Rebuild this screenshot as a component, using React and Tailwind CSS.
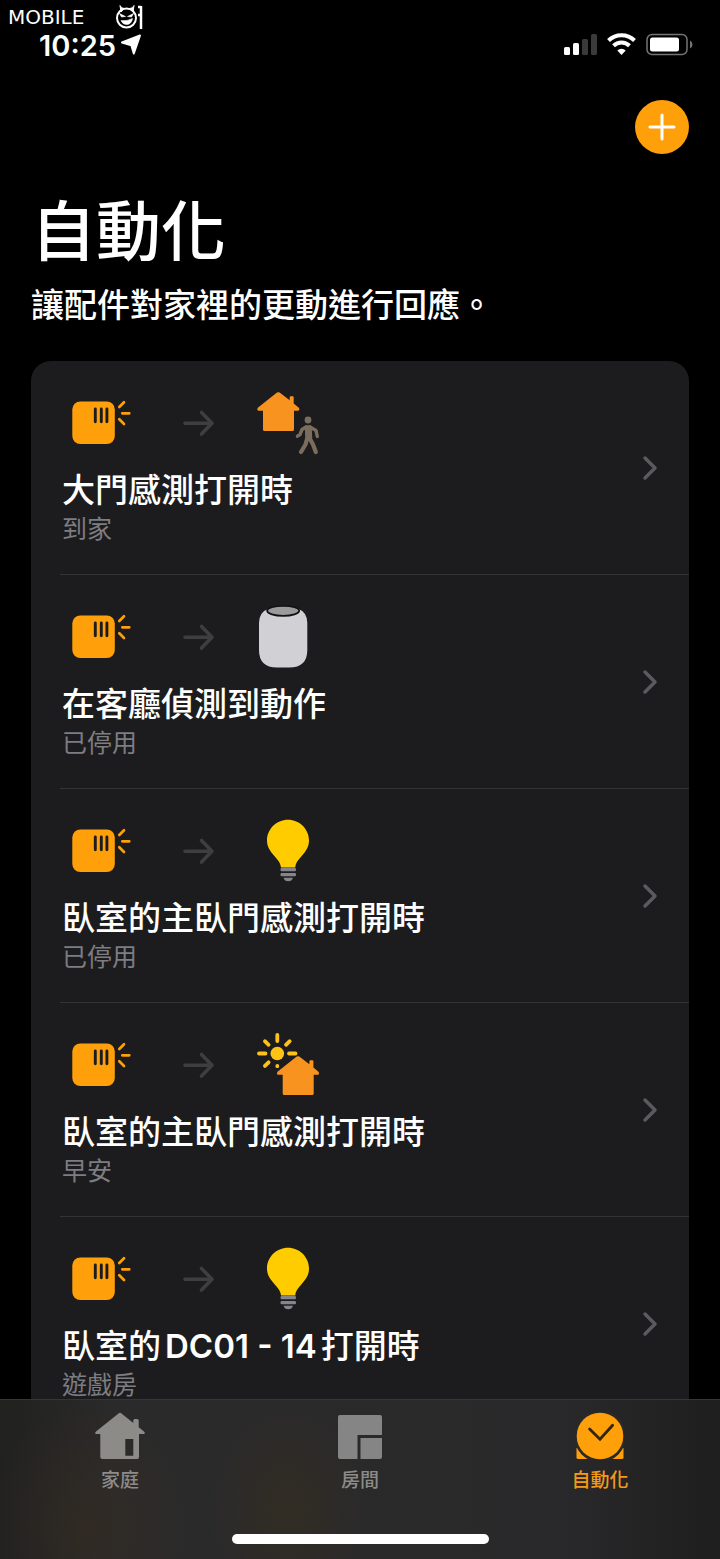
import React from "react";

function BrandMark() {
  return (
    <div className="absolute top-1 left-2 flex h-[26px] items-center gap-[6px] text-white">
      <span className="w-[102px] font-['DejaVu_Sans',sans-serif] text-xl leading-none">MOBILE</span>
      <svg width="28" height="26" viewBox="0 0 28 26" fill="none" stroke="#fff" aria-hidden="true">
        <circle cx="10.500" cy="14" r="9.500" strokeWidth="2" />
        <path d="M4 1.500 Q5 4.500 8.500 4.500 L5 8 Z M18 1.500 Q17 4.500 13.500 4.500 L17 8 Z" fill="#fff" strokeWidth="1" />
        <path d="M3.500 9.500 L9.500 12.500 L5.500 13 Z M17.500 9.500 L11.500 12.500 L15.500 13 Z" fill="#fff" strokeWidth="0.600" />
        <path d="M5 16.500 Q11 17.500 16.500 14.500 Q15.500 20.500 10.500 20.500 Q6.500 20.500 5 16.500 Z" fill="#fff" strokeWidth="0.600" />
        <path d="M25 2 V25 M22 3 H25 M22 11 H25" strokeWidth="2.500" />
      </svg>
    </div>
  );
}

function StatusBar() {
  return (
    <header className="flex h-[90px] shrink-0 items-center justify-between pr-[27px] pl-[39px]">
      <div className="flex items-center gap-[5px]">
        <time className="text-[29px] leading-none font-semibold">10:25</time>
        <svg width="22" height="22" viewBox="0 0 22 22" fill="#fff" stroke="#fff" strokeWidth="2" strokeLinejoin="round" aria-hidden="true">
          <path d="M19 1.500 L12.800 19.500 L10.300 11.200 L1 8.500 Z" />
        </svg>
      </div>
      <svg width="129" height="24" viewBox="0 0 129 24" fill="#fff" role="img" aria-label="訊號、Wi-Fi 與電池">
        <rect x="0" y="14" width="6" height="8" rx="1.500" />
        <rect x="9" y="10" width="6" height="12" rx="1.500" />
        <rect x="18" y="6" width="6" height="16" rx="1.500" fill="#3a3a3c" />
        <rect x="27" y="1" width="6" height="21" rx="1.500" fill="#3a3a3c" />
        <g fill="none" stroke="#fff" strokeWidth="4">
          <path d="M44.500 7.500 A18.500 18.500 0 0 1 70.500 7.500" />
          <path d="M49.500 12.800 A11.500 11.500 0 0 1 65.500 12.800" />
        </g>
        <path d="M57.500 22 L53.300 17.500 A6 6 0 0 1 61.700 17.500 Z" />
        <rect x="83" y="1.500" width="40" height="20" rx="5" fill="none" stroke="#747476" strokeWidth="1.500" />
        <rect x="86" y="4.500" width="29" height="14" rx="2.500" />
        <path d="M126 7.500 Q128.500 9 128.500 11.500 Q128.500 14 126 15.500 Z" fill="#747476" />
      </svg>
    </header>
  );
}

function SensorIcon() {
  return (
    <svg width="60" height="66" viewBox="0 0 60 66" aria-hidden="true">
      <rect x="1.300" y="12.500" width="42.500" height="42.500" rx="8" fill="#ff9f0a" />
      <path d="M24.300 20 V32.800 M30.300 20 V32.800 M35.900 20 V32.800" stroke="#1c1c1e" strokeWidth="2.900" strokeLinecap="round" />
      <path d="M48.300 18 L53 13.300 M51.300 24.300 H58.300 M48.300 30.300 L53 35" stroke="#ff9f0a" strokeWidth="2.700" strokeLinecap="round" />
    </svg>
  );
}

function ArrowIcon() {
  return (
    <svg width="32" height="66" viewBox="0 0 32 66" fill="none" stroke="#3e3e40" strokeWidth="3.600" strokeLinecap="round" strokeLinejoin="round" aria-hidden="true">
      <path d="M2 34.300 H29 M18.500 23.500 L29 34.300 L18.500 45.100" />
    </svg>
  );
}

const HOUSE =
  "M20 3.600 Q21.300 2.700 22.600 3.600 L32.700 11.300 V8.200 Q32.700 7.200 33.700 7.200 H35.700 Q36.700 7.200 36.700 8.200 V14.500 L41.800 18.700 Q43.200 21.700 41 21.700 H37 V40.500 Q37 42 35.500 42 H7.500 Q6 42 6 40.500 V21.700 H1.600 Q-0.600 21.700 0.800 18.700 Z";

function SceneIcon({ kind }) {
  return (
    <svg width="64" height="66" viewBox="0 0 64 66" aria-hidden="true">
      {kind === "arrive" && (
        <>
          <path d={HOUSE} fill="#f7931e" />
          <g fill="none" stroke="#7b6d5d" strokeLinecap="round" strokeLinejoin="round">
            <circle cx="51" cy="31" r="3.400" fill="#7b6d5d" stroke="none" />
            <path d="M49.500 38 H53 L53.500 49 H50 Z" fill="#7b6d5d" strokeWidth="3.500" />
            <path d="M49 38 L45 40.500 L43 45.500 L40.500 47.200 M53 38 L59 41.500 L60.300 47.500" strokeWidth="3.400" />
            <path d="M50 50 L48.500 55.500 L44 63 M52.500 49 L56 55.500 L58.800 63" strokeWidth="4.200" />
          </g>
        </>
      )}
      {kind === "speaker" && (
        <>
          <path d="M12 5.500 Q2 9 2 20 V47 Q2 64.500 20 64.500 H32.300 Q50.300 64.500 50.300 47 V20 Q50.300 9 40.500 5.500 Z" fill="#d1d0d5" />
          <ellipse cx="26.200" cy="7.800" rx="16" ry="5" fill="#9b9b9b" stroke="#111113" strokeWidth="1.800" />
        </>
      )}
      {kind === "bulb" && (
        <>
          <path d="M31 2.700 C42.600 2.700 52 12 52 23.500 C52 36.500 38.800 41 38.300 50.500 H24 C23.500 41 10 36.500 10 23.500 C10 12 19.400 2.700 31 2.700 Z" fill="#ffcc00" />
          <rect x="23.500" y="51" width="15.500" height="3.300" rx="1.200" fill="#84868b" />
          <rect x="23.500" y="56" width="15.500" height="3.300" rx="1.200" fill="#84868b" />
          <path d="M26.500 60.800 H36 Q35 64.300 31.200 64.300 Q27.500 64.300 26.500 60.800 Z" fill="#84868b" />
        </>
      )}
      {kind === "morning" && (
        <>
          <circle cx="20.300" cy="22.500" r="6.800" fill="#fdc213" />
          <path
            d="M20.300 4 V10 M32.700 10.200 L29 13.800 M38.500 22.500 H32 M20.300 35 V35.200 M7.900 34.900 L11.600 31.300 M2 22.500 H8.500 M7.900 10.200 L11.600 13.800"
            stroke="#fcc21b"
            strokeWidth="3.800"
            strokeLinecap="round"
          />
          <path transform="translate(19.700 22)" d={HOUSE} fill="#f7931e" />
        </>
      )}
    </svg>
  );
}

function Chevron() {
  return (
    <svg className="shrink-0" width="16" height="26" viewBox="0 0 16 26" fill="none" stroke="#5b5b5f" strokeWidth="3.500" strokeLinecap="round" strokeLinejoin="round" aria-hidden="true">
      <path d="M3 3 L13 13 L3 23" />
    </svg>
  );
}

const AUTOMATIONS = [
  { title: "大門感測打開時", detail: "到家", kind: "arrive" },
  { title: "在客廳偵測到動作", detail: "已停用", kind: "speaker" },
  { title: "臥室的主臥門感測打開時", detail: "已停用", kind: "bulb" },
  { title: "臥室的主臥門感測打開時", detail: "早安", kind: "morning" },
  {
    title: (
      <>
        臥室的<span className="mx-1 font-semibold">DC01 - 14</span>打開時
      </>
    ),
    detail: "遊戲房",
    kind: "bulb",
  },
];

function AutomationRow({ title, detail, kind }) {
  return (
    <li className="ml-[29px] border-b border-[#333335]">
      <button type="button" className="flex w-full items-center justify-between pr-[31px] pl-[2px] text-left">
        <span className="block pt-7 pb-[31px]">
          <span className="flex items-center pl-[9px]">
            <SensorIcon />
            <span className="ml-[52px]">
              <ArrowIcon />
            </span>
            <span className="ml-[42px]">
              <SceneIcon kind={kind} />
            </span>
          </span>
          <span className="mt-[13px] block text-[33px] leading-[44px] font-medium">{title}</span>
          <span className="mt-[3px] block text-[25px] leading-7 text-[#7d7d82]">{detail}</span>
        </span>
        <Chevron />
      </button>
    </li>
  );
}

function HomeTabIcon() {
  return (
    <svg width="50" height="48" viewBox="0 0 50 48" fill="#8d8b88" aria-hidden="true">
      <path
        fillRule="evenodd"
        d="M23.500 1.400 Q25 0.300 26.500 1.400 L38.300 11 V8.500 Q38.300 7 39.800 7 H42.200 Q43.700 7 43.700 8.500 V15.300 L49 19.500 Q51 22 48.500 22 H44 V45 Q44 47 42 47 H7.300 Q5.300 47 5.300 45 V22 H1.500 Q-1 22 1 19.500 Z M30.300 27 V43.700 H38.300 V27 Z"
      />
    </svg>
  );
}

function RoomsTabIcon() {
  return (
    <svg width="46" height="48" viewBox="0 0 46 48" fill="#868586" aria-hidden="true">
      <path d="M3 3 H43 Q45 3 45 5 V23 H20.500 V47 H3 Q1 47 1 45 V5 Q1 3 3 3 Z" />
      <path d="M23.500 26 H45 V45 Q45 47 43 47 H23.500 Z" />
    </svg>
  );
}

function AutomationTabIcon() {
  return (
    <svg width="48" height="48" viewBox="0 0 48 48" aria-hidden="true">
      <path d="M0.500 36 V45.500 Q0.500 47 2 47 H46 Q47.500 47 47.500 45.500 V36 Z" fill="#ff9f0a" />
      <circle cx="24" cy="24" r="26" fill="#29282a" />
      <circle cx="24" cy="24" r="23.300" fill="#ff9f0a" />
      <path d="M13.600 17 L24 27.300 L36.600 13.300" fill="none" stroke="#332611" strokeWidth="2.800" strokeLinecap="round" />
    </svg>
  );
}

const TABS = [
  { label: "家庭", Icon: HomeTabIcon },
  { label: "房間", Icon: RoomsTabIcon },
  { label: "自動化", Icon: AutomationTabIcon, active: true },
];

function TabBar() {
  return (
    <nav className="shrink-0 border-t border-[#363638] bg-[radial-gradient(ellipse_100px_120px_at_12%_80%,#3a2d2077,transparent),radial-gradient(ellipse_80px_110px_at_40%_70%,#38301e88,transparent),linear-gradient(90deg,#212120,#2b2a2a_16%,#29292b_78%,#1e1e1e)] pt-3">
      <ul className="grid grid-cols-3">
        {TABS.map(({ label, Icon, active }) => (
          <li key={label}>
            <a
              href="#"
              aria-current={active ? "page" : undefined}
              className={`flex flex-col items-center gap-[7px] text-[19px] leading-7 font-medium ${active ? "text-[#f29a17]" : "text-[#8d8b89]"}`}
            >
              <Icon />
              {label}
            </a>
          </li>
        ))}
      </ul>
      <div className="mx-auto mt-[39px] mb-[15px] h-[10px] w-[257px] rounded-full bg-white" />
    </nav>
  );
}

export default function App() {
  return (
    <div
      lang="zh-Hant"
      className="relative flex h-dvh flex-col bg-black font-['Inter','Noto_Sans_CJK_TC',sans-serif] text-white"
    >
      <BrandMark />
      <StatusBar />
      <main className="min-h-0 flex-1 overflow-y-auto px-[31px] pt-[10px] [scrollbar-width:none]">
        <div className="flex justify-end">
          <button type="button" aria-label="加入自動化" className="flex size-[54px] items-center justify-center rounded-full bg-[#ff9f0a]">
            <svg width="28" height="28" viewBox="0 0 28 28" stroke="#fff" strokeWidth="3" strokeLinecap="round" aria-hidden="true">
              <path d="M14 2 V26 M2 14 H26" />
            </svg>
          </button>
        </div>
        <h1 className="mt-10 text-[65px] leading-[76px] font-medium">自動化</h1>
        <p className="mt-[15px] text-[33px] leading-10 font-medium">讓配件對家裡的更動進行回應。</p>
        <ul className="mt-9 rounded-[20px] bg-[#1c1c1e]">
          {AUTOMATIONS.map((item, index) => (
            <AutomationRow key={index} {...item} />
          ))}
        </ul>
      </main>
      <TabBar />
    </div>
  );
}
